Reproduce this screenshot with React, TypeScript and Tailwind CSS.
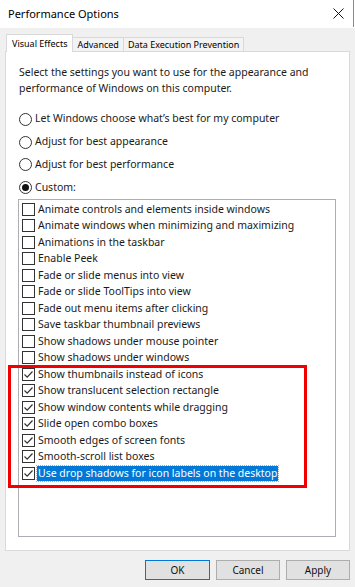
import React from "react";

const items: { label: string; checked: boolean; selected?: boolean }[] = [
  { label: "Animate controls and elements inside windows", checked: false },
  { label: "Animate windows when minimizing and maximizing", checked: false },
  { label: "Animations in the taskbar", checked: false },
  { label: "Enable Peek", checked: false },
  { label: "Fade or slide menus into view", checked: false },
  { label: "Fade or slide ToolTips into view", checked: false },
  { label: "Fade out menu items after clicking", checked: false },
  { label: "Save taskbar thumbnail previews", checked: false },
  { label: "Show shadows under mouse pointer", checked: false },
  { label: "Show shadows under windows", checked: false },
  { label: "Show thumbnails instead of icons", checked: true },
  { label: "Show translucent selection rectangle", checked: true },
  { label: "Show window contents while dragging", checked: true },
  { label: "Slide open combo boxes", checked: true },
  { label: "Smooth edges of screen fonts", checked: true },
  { label: "Smooth-scroll list boxes", checked: true },
  { label: "Use drop shadows for icon labels on the desktop", checked: true, selected: true },
];

const radios = [
  { label: "Let Windows choose what\u2019s best for my computer", on: false },
  { label: "Adjust for best appearance", on: false },
  { label: "Adjust for best performance", on: false },
  { label: "Custom:", on: true },
];

function Check({ checked }: { checked: boolean }) {
  return (
    <div className="w-[13px] h-[13px] border border-[#333333] bg-white flex items-center justify-center shrink-0">
      {checked && (
        <svg width="11" height="11" viewBox="0 0 11 11">
          <path d="M1.5 5.5 L4.2 8.2 L9.5 2.5" fill="none" stroke="#333333" strokeWidth="1.2" />
        </svg>
      )}
    </div>
  );
}

function Radio({ on }: { on: boolean }) {
  return (
    <div className="w-[13px] h-[13px] rounded-full border border-[#333333] bg-white flex items-center justify-center shrink-0">
      {on && <div className="w-[7px] h-[7px] rounded-full bg-[#111111]" />}
    </div>
  );
}

export default function App() {
  return (
    <div
      className="relative w-[355px] h-[587px] bg-[#f0f0f0] flex flex-col text-[#000000] overflow-hidden"
      style={{ fontFamily: '"Noto Sans", "Open Sans", sans-serif' }}
    >
      {/* Title bar */}
      <div className="h-[28px] bg-white flex">
        <div className="flex-1 h-[27px] flex items-center justify-between pl-[8px] pr-[9px] border-r border-[#8a8a8a]">
          <span className="text-[11px] leading-none text-[#000]">Performance Options</span>
          <svg width="11" height="11" viewBox="0 0 11 11">
            <path d="M0.5 0.5 L10.5 10.5 M10.5 0.5 L0.5 10.5" stroke="#111" strokeWidth="1" />
          </svg>
        </div>
        <div className="w-[1px]" />
      </div>

      {/* Body */}
      <div className="flex-1 flex flex-col px-[5px] pt-[6px]">
        {/* Tabs */}
        <div className="flex items-end h-[17px] pl-[1px]">
          <div className="relative z-10 h-[18px] mb-[-1px] px-[5px] bg-white border border-b-0 border-[#d9d9d9] flex items-center text-[9px] leading-none">
            Visual Effects
          </div>
          <div className="h-[14px] px-[4px] bg-[#f3f3f3] border border-l-0 border-b-0 border-[#d9d9d9] flex items-center text-[9px] leading-none">
            Advanced
          </div>
          <div className="h-[14px] px-[4px] bg-[#f3f3f3] border border-l-0 border-b-0 border-[#d9d9d9] flex items-center text-[9px] leading-none">
            Data Execution Prevention
          </div>
        </div>

        {/* Panel */}
        <div className="h-[500px] bg-white border border-[#d9d9d9] px-[12px] pt-[12px] flex flex-col text-[10.5px] text-[#1a1a1a]">
          <p className="pl-[1px] leading-[16px]">
            Select the settings you want to use for the appearance and
            <br />
            performance of Windows on this computer.
          </p>
          <div className="mt-[12px] flex flex-col pl-[1px]">
            {radios.map((r) => (
              <div key={r.label} className="h-[22.7px] flex items-center gap-[3px]">
                <Radio on={r.on} />
                <span>{r.label}</span>
              </div>
            ))}
          </div>
          <div className="w-[318px] h-[338px] border border-[#adadb5] bg-white pt-[1px] pl-[3px] flex flex-col">
            {items.map((it) => (
              <div key={it.label} className="h-[16.5px] flex items-center gap-[2px] shrink-0">
                <Check checked={it.checked} />
                {it.selected ? (
                  <span className="bg-[#0078d7] text-white px-[1px] leading-[15px] outline outline-1 outline-dotted outline-[#d9a45e]">
                    {it.label}
                  </span>
                ) : (
                  <span className="px-[1px] leading-[15px]">{it.label}</span>
                )}
              </div>
            ))}
          </div>
        </div>

        {/* Buttons */}
        <div className="mt-[9px] flex justify-end gap-[6px]">
          <button className="w-[65px] h-[20px] bg-[#e1e1e1] border border-[#0078d7] text-[10px] leading-none text-[#111]">
            OK
          </button>
          <button className="w-[64px] h-[20px] bg-[#e1e1e1] border border-[#adadad] text-[10px] leading-none text-[#111]">
            Cancel
          </button>
          <button className="w-[64px] h-[20px] bg-[#e1e1e1] border border-[#adadad] text-[10px] leading-none text-[#111]">
            Apply
          </button>
        </div>
      </div>

      {/* Red annotation rectangle */}
      <div className="absolute left-[8px] top-[365px] w-[299px] h-[123px] border-[3px] border-[#f00000] pointer-events-none" />
    </div>
  );
}
